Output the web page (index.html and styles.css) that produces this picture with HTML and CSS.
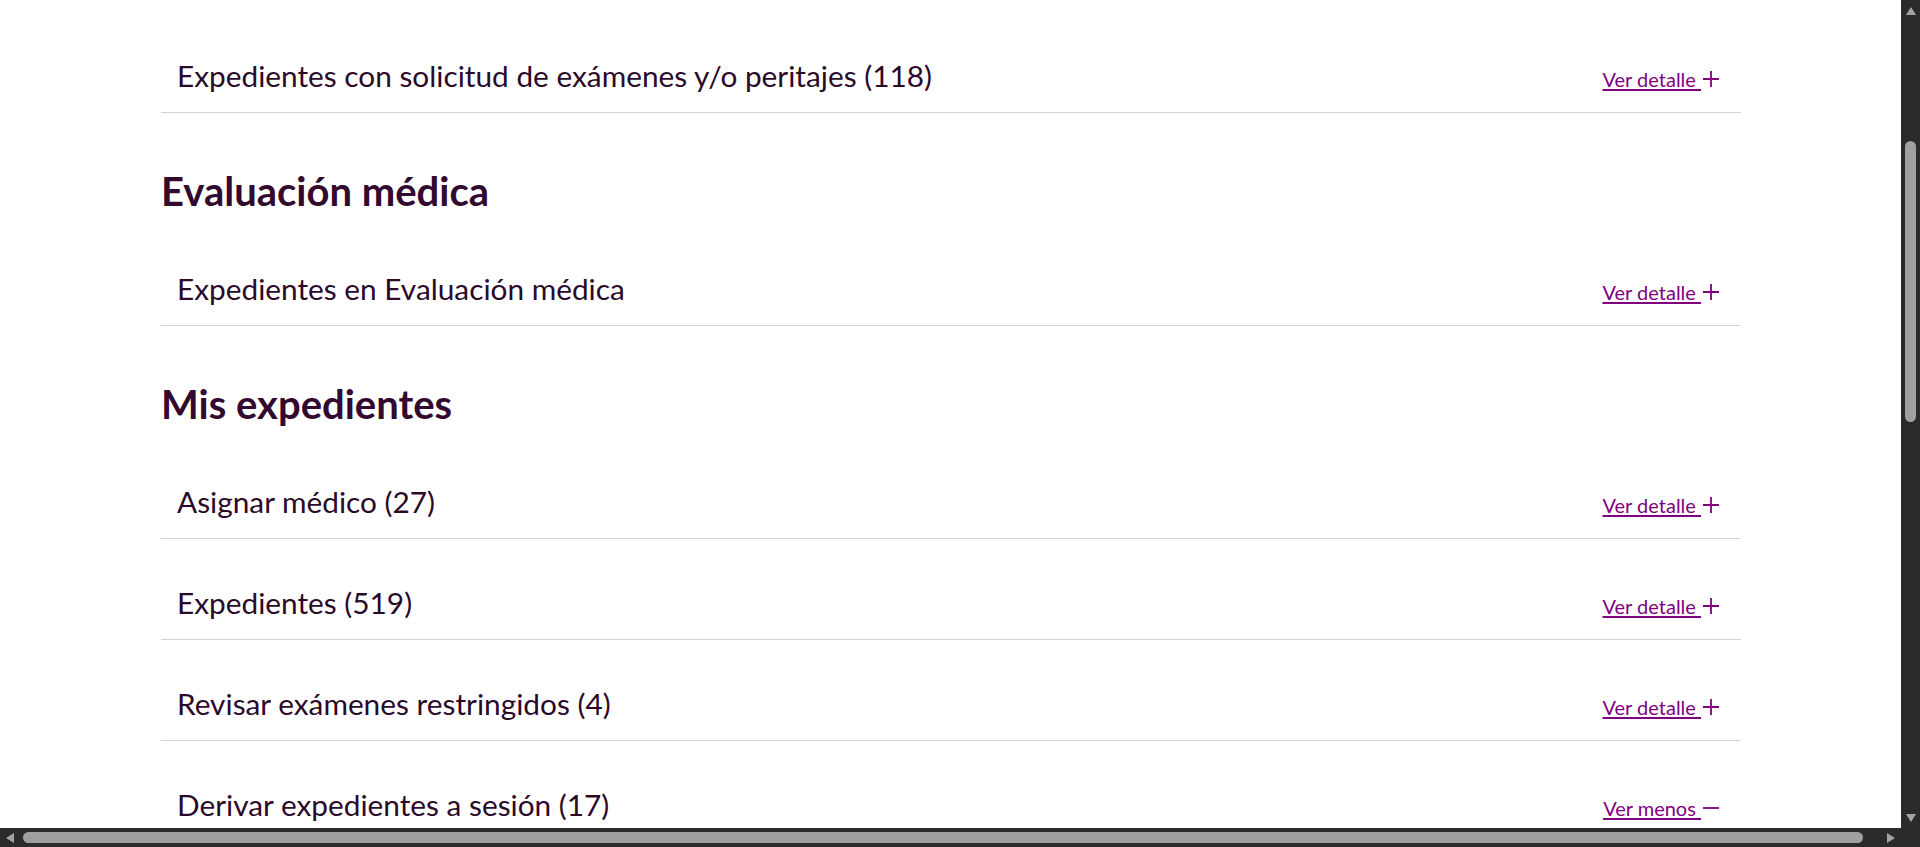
FILE: index.html
```html
<!DOCTYPE html>
<html lang="es">
<head>
<meta charset="utf-8">
<title>Expedientes</title>
<link rel="stylesheet" href="styles.css">
</head>
<body>
<div class="frame">
  <main class="viewport">
    <div class="container">
      <div class="row">
        <span class="row-title">Expedientes con solicitud de exámenes y/o peritajes (118)</span>
        <a class="toggle" href="#"><span class="toggle-label">Ver detalle&nbsp;</span><svg class="ico" viewBox="0 0 16 16"><path d="M8 0v16M0 8h16"/></svg></a>
      </div>

      <h2 class="section-title">Evaluación médica</h2>
      <div class="row">
        <span class="row-title">Expedientes en Evaluación médica</span>
        <a class="toggle" href="#"><span class="toggle-label">Ver detalle&nbsp;</span><svg class="ico" viewBox="0 0 16 16"><path d="M8 0v16M0 8h16"/></svg></a>
      </div>

      <h2 class="section-title">Mis expedientes</h2>
      <div class="row">
        <span class="row-title">Asignar médico (27)</span>
        <a class="toggle" href="#"><span class="toggle-label">Ver detalle&nbsp;</span><svg class="ico" viewBox="0 0 16 16"><path d="M8 0v16M0 8h16"/></svg></a>
      </div>
      <div class="row">
        <span class="row-title">Expedientes (519)</span>
        <a class="toggle" href="#"><span class="toggle-label">Ver detalle&nbsp;</span><svg class="ico" viewBox="0 0 16 16"><path d="M8 0v16M0 8h16"/></svg></a>
      </div>
      <div class="row">
        <span class="row-title">Revisar exámenes restringidos (4)</span>
        <a class="toggle" href="#"><span class="toggle-label">Ver detalle&nbsp;</span><svg class="ico" viewBox="0 0 16 16"><path d="M8 0v16M0 8h16"/></svg></a>
      </div>
      <div class="row">
        <span class="row-title">Derivar expedientes a sesión (17)</span>
        <a class="toggle" href="#"><span class="toggle-label">Ver menos&nbsp;</span><svg class="ico" viewBox="0 0 16 16"><path d="M0 8h16"/></svg></a>
      </div>
    </div>
  </main>
  <div class="vscroll">
    <svg class="arrow" viewBox="0 0 10 8"><path d="M5 0L10 8H0z"/></svg>
    <div class="vthumb"></div>
    <svg class="arrow arrow-down" viewBox="0 0 10 8"><path d="M0 0H10L5 8z"/></svg>
  </div>
  <div class="hscroll">
    <svg class="harrow" viewBox="0 0 8 10"><path d="M8 0V10L0 5z"/></svg>
    <div class="hthumb"></div>
    <svg class="harrow harrow-right" viewBox="0 0 8 10"><path d="M0 0L8 5L0 10z"/></svg>
  </div>
  <div class="corner"></div>
</div>
</body>
</html>
```

FILE: styles.css
```css
html, body {
  margin: 0;
  padding: 0;
  height: 100%;
  overflow: hidden;
  background: #ffffff;
}

.frame {
  display: grid;
  grid-template-columns: 1fr 19px;
  grid-template-rows: 1fr 19px;
  width: 1920px;
  height: 847px;
}

.viewport {
  overflow: hidden;
  background: #ffffff;
  font-family: Lato, "Open Sans", Arial, sans-serif;
}

.container {
  width: 1580px;
  margin: 0 0 0 161px;
  padding-top: 12px;
}

.row {
  display: flex;
  justify-content: space-between;
  align-items: baseline;
  height: 36px;
  padding: 46px 22px 18px 16px;
  border-bottom: 1px solid #d3d3d3;
}

.row-title {
  font-size: 29.8px;
  line-height: 36px;
  color: #2b0a29;
}

.toggle {
  display: inline-flex;
  align-items: baseline;
  font-size: 20px;
  line-height: 24px;
  color: #800080;
  text-decoration: none;
}

.toggle-label {
  text-decoration: underline;
  text-underline-offset: 2px;
}

.ico {
  align-self: center;
  width: 16px;
  height: 16px;
  margin-left: 2px;
  margin-top: -1px;
  stroke: #800080;
  stroke-width: 1.8;
  fill: none;
}

.section-title {
  margin: 54px 0 10px 0;
  font-size: 40px;
  line-height: 48px;
  font-weight: 700;
  color: #330a2f;
}

.vscroll {
  background: #2b2b2b;
  display: flex;
  flex-direction: column;
  align-items: center;
}

.arrow {
  width: 10px;
  height: 8px;
  margin-top: 7px;
  fill: #a3a3a3;
}

.arrow-down {
  margin-top: auto;
  margin-bottom: 6px;
}

.vthumb {
  width: 11px;
  height: 281px;
  margin-top: 126px;
  border-radius: 6px;
  background: #a0a0a0;
}

.hscroll {
  background: #2b2b2b;
  display: flex;
  align-items: center;
}

.harrow {
  width: 8px;
  height: 10px;
  margin-left: 6px;
  fill: #a3a3a3;
}

.harrow-right {
  margin-left: auto;
  margin-right: 6px;
}

.hthumb {
  width: 1840px;
  height: 11px;
  margin-left: 9px;
  border-radius: 6px;
  background: #a0a0a0;
}

.corner {
  background: #2b2b2b;
}
```
